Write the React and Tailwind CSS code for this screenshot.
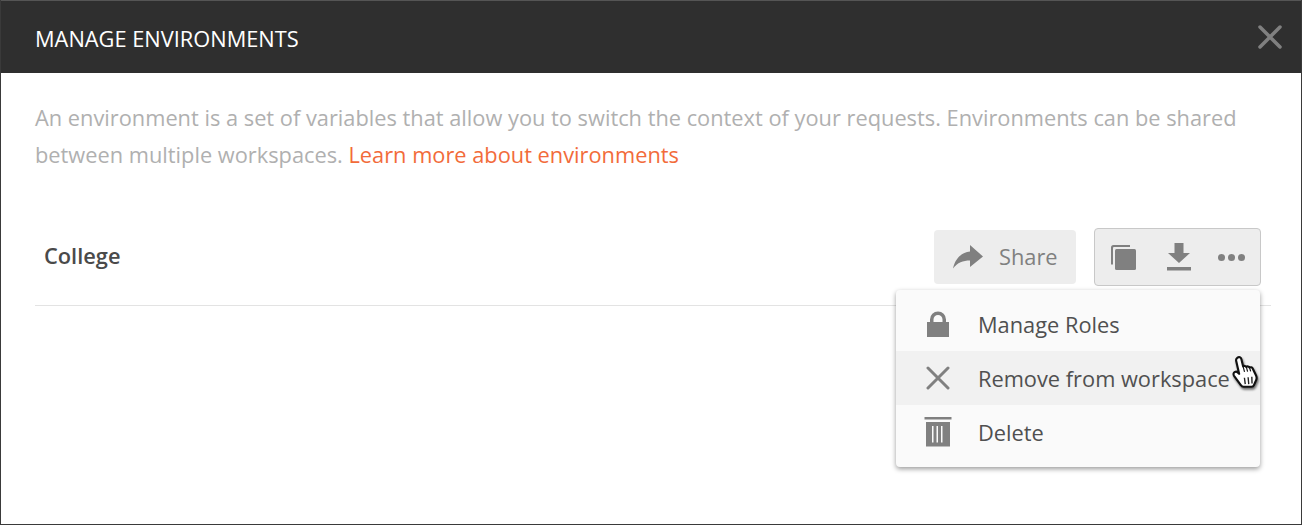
import React from 'react';

function CopyIcon() {
  return (
    <svg width="27" height="27" viewBox="0 0 27 27" fill="#808080">
      <path d="M1 3.500A2.500 2.500 0 0 1 3.500 1H20v2H4a1 1 0 0 0-1 1v16.500H1z" />
      <rect x="5" y="5" width="21" height="21" rx="1.500" />
    </svg>
  );
}

function DownloadIcon() {
  return (
    <svg width="26" height="30" viewBox="0 0 26 30" fill="#808080">
      <path d="M8.500 1h9v10H24L13 21 2 11h6.500z" />
      <rect x="1" y="25" width="24" height="3.500" />
    </svg>
  );
}

function ShareIcon() {
  return (
    <svg width="32" height="26" viewBox="0 0 32 26" fill="#808080">
      <path d="M18 1l13 11.500L18 23v-6.500C11 16.500 5.500 18.500 1 24.500 3 15 9 8.500 18 7.500z" />
    </svg>
  );
}

function LockIcon() {
  return (
    <svg width="24" height="27" viewBox="0 0 24 27" fill="#808080">
      <path d="M1 11h3V8.500a8 8 0 0 1 16 0V11h3v15H1zM7.500 11h9V8.500a4.500 4.500 0 0 0-9 0z" fillRule="evenodd" />
    </svg>
  );
}

function CloseIcon({ size = 24, color = '#808080', stroke = 3.500 }) {
  return (
    <svg width={size} height={size} viewBox="0 0 24 24" fill="none" stroke={color} strokeWidth={stroke} strokeLinecap="round">
      <path d="M2 2l20 20M22 2L2 22" />
    </svg>
  );
}

function TrashIcon() {
  return (
    <svg width="28" height="30" viewBox="0 0 28 30" fill="#808080">
      <rect x="0.500" y="0" width="27" height="2.500" />
      <path fillRule="evenodd" d="M2 5h24v24.500H2zM8 9v16.500h1.500V9zM12.500 9v16.500H14V9zM17 9v16.500h1.500V9z" />
    </svg>
  );
}

function HandCursor() {
  return (
    <svg width="30" height="36" viewBox="0 0 28 34" className="drop-shadow-[1px_2px_1px_rgba(0,0,0,0.55)]">
      <path
        d="M6 2.500c1.500-1 3.200-.3 3.600 1.300l1.700 7c1-.8 2.400-.6 3 .4.900-.8 2.500-.5 3 .6 1-.6 2.400-.2 2.900.8l3.300 6.800c.8 1.800.6 3.800-.4 5.400l-1.600 3.700c-.4 1-1.300 1.500-2.300 1.500h-7.500c-1 0-1.900-.5-2.400-1.400l-6.600-9c-.8-1.200-.6-2.700.5-3.400 1-.6 2.200-.5 3 .3l1.300 1.300L4.800 6c-.4-1.400.1-2.800 1.200-3.500z"
        fill="#fff"
        stroke="#111"
        strokeWidth="2"
        strokeLinejoin="round"
      />
      <path d="M12.500 21.500l.8 6M16 21l.6 6.500M19.500 20.500l.2 6.500" stroke="#222" strokeWidth="1.300" fill="none" />
      <path d="M11.300 11l1.300 5M14.300 11.200l1.200 4.500M17.300 11.800l1.100 3.700" stroke="#111" strokeWidth="1.100" fill="none" />
    </svg>
  );
}

function MenuItem({ icon, label, active }) {
  return (
    <div className={`flex items-center h-[54px] pl-[28px] ${active ? 'bg-[#f1f1f1]' : ''}`}>
      <div className="w-[28px] flex justify-center shrink-0">{icon}</div>
      <span className="ml-[26px] pt-[3px] text-[21.8px] text-[#505050] whitespace-nowrap">{label}</span>
    </div>
  );
}

export default function App() {
  return (
    <div className="w-[1302px] h-[525px] bg-white border border-[#3a3a3a] border-t-0 overflow-hidden font-['Open_Sans',sans-serif] flex flex-col">
      <header className="h-[73px] shrink-0 bg-[#2f2f2f] border-t border-[#555] flex items-center justify-between pl-[34px] pr-[19px]">
        <h1 className="pt-[4px] text-[21.8px] text-white">MANAGE ENVIRONMENTS</h1>
        <CloseIcon size={24} color="#808080" stroke={3.500} />
      </header>

      <main className="flex-1 pl-[34px] pr-[30px] pt-[26px]">
        <p className="text-[21.8px] leading-[37px] text-[#b0b0b0]">
          An environment is a set of variables that allow you to switch the context of your requests. Environments can be shared between multiple workspaces.{' '}
          <a className="text-[#f26b3a]">Learn more about environments</a>
        </p>

        <div className="relative mt-[55px] h-[78px] border-b border-[#e3e3e3] flex items-start justify-between">
          <span className="ml-[9px] mt-[12px] text-[21.8px] font-semibold text-[#4a4a4a]">College</span>

          <div className="flex items-start gap-[18px] mr-[10px]">
            <button className="mt-[2px] w-[142px] h-[54px] bg-[#ededed] rounded-[4px] flex items-center pl-[18px]">
              <ShareIcon />
              <span className="ml-[15px] text-[21.8px] text-[#808080]">Share</span>
            </button>
            <div className="w-[167px] h-[58px] bg-[#ededed] border border-[#c8c8c8] rounded-[4px] flex items-center pl-[15px]">
              <CopyIcon />
              <div className="ml-[29px]"><DownloadIcon /></div>
              <div className="ml-[26px] flex gap-[3px]">
                <span className="w-[7px] h-[7px] rounded-full bg-[#808080]" />
                <span className="w-[7px] h-[7px] rounded-full bg-[#808080]" />
                <span className="w-[7px] h-[7px] rounded-full bg-[#808080]" />
              </div>
            </div>
          </div>

          <div className="absolute right-[11px] top-[62px] w-[364px] h-[177px] bg-[#fafafa] rounded-[4px] shadow-[0_2px_5px_rgba(0,0,0,0.4)] py-[7px] z-10">
            <MenuItem icon={<LockIcon />} label="Manage Roles" />
            <MenuItem icon={<CloseIcon size={24} color="#808080" stroke={3} />} label="Remove from workspace" active />
            <MenuItem icon={<TrashIcon />} label="Delete" />
            <div className="absolute left-[335px] top-[65px]"><HandCursor /></div>
          </div>
        </div>
      </main>
    </div>
  );
}
